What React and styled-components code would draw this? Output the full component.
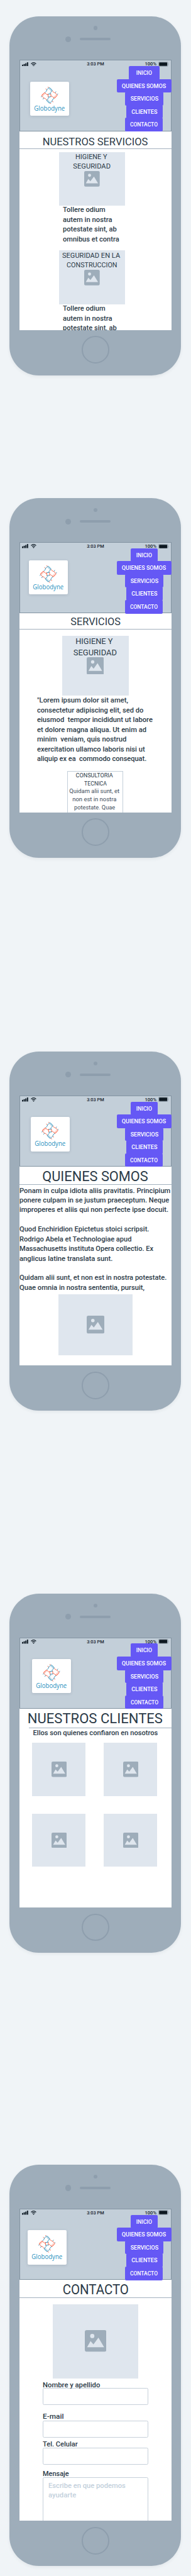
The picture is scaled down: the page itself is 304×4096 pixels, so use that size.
import React from "react";
import styled, { createGlobalStyle } from "styled-components";

// Design units to CSS pixels.
const SCALE = 4096 / 7960;
const px = (n) => `${+(n * SCALE).toFixed(3)}px`;

const INK = "#2b3a47";
const SOFT_INK = "#3d4c59";
const BODY = "#9eadba";
const DETAIL = "#8e9ead";
const PANEL = "#dfe6ee";
const EDGE = "#c6d0da";
const VIOLET = "#6558f5";
const BLUE = "#1f8ab8";
const RED = "#fb5b3c";

const GlobalStyle = createGlobalStyle`
  * { box-sizing: border-box; }
  html, body { margin: 0; background: #f0f4f7; }
  body { font-family: Roboto, "Liberation Sans", sans-serif; color: ${INK}; }
`;

/* ---------- text fitted to a set width ---------- */

const pen = document.createElement("canvas").getContext("2d");
const inkWidth = (text, weight, size, family) => {
  pen.font = `${weight} ${size * 10}px ${family}`;
  const m = pen.measureText(text);
  return (m.actualBoundingBoxLeft + m.actualBoundingBoxRight) / 10;
};

const FitText = styled.span`
  display: inline-block;
  white-space: pre;
  transform-origin: ${(p) => (p.$left ? "left" : "center")} center;
`;

function Fit({ text, width, size, weight = 500, family = "Roboto", left }) {
  const k = width / inkWidth(text.trim(), weight, size, family);
  return (
    <FitText $left={left} style={{ transform: `scaleX(${k.toFixed(4)})` }}>
      {text}
    </FitText>
  );
}

const Paragraph = styled.div`
  font-size: ${(p) => px(p.$size)};
  line-height: ${(p) => px(p.$leading)};
  font-weight: ${(p) => p.$weight};
  color: ${(p) => p.$color || INK};
  margin: ${(p) => px(p.$top || 0)} 0 0 ${(p) => px(p.$indent || 0)};
`;

const Line = styled.div`
  display: flex;
  justify-content: ${(p) => (p.$center ? "center" : "flex-start")};
  height: ${(p) => px(p.$leading)};
  color: ${(p) => p.$color || "inherit"};
`;

function Lines({ lines, size = 22, leading = 30, weight = 500, top, indent, center, color }) {
  return (
    <Paragraph $size={size} $leading={leading} $weight={weight} $top={top} $indent={indent} $color={color}>
      {lines.map(([text, width, tone], i) => (
        <Line key={i} $leading={leading} $center={center} $color={tone}>
          {text && <Fit text={text} width={width} size={size} weight={weight} left={!center} />}
        </Line>
      ))}
    </Paragraph>
  );
}

/* ---------- phone shell ---------- */

const Page = styled.main`
  width: ${px(590)};
  height: 4096px;
  padding: ${px(50)} 0 0 ${px(30)};
  overflow: hidden;
`;

const Shell = styled.section`
  width: ${px(530)};
  margin-bottom: ${(p) => px(p.$after)};
  padding: 0 ${px(30)};
  border-radius: ${px(91)};
  background: ${BODY};
  box-shadow: 0 2px 5px rgba(40, 50, 70, 0.07);
`;

const Brow = styled.div`
  height: ${px(135)};
  padding-top: ${px(30)};
`;

const Sensor = styled.div`
  width: ${px(12.6)};
  height: ${px(12.6)};
  margin: 0 auto;
  border-radius: 50%;
  background: ${DETAIL};
`;

const Earpiece = styled.div`
  display: flex;
  align-items: center;
  gap: ${px(28.5)};
  margin-top: ${px(20)};
  padding-left: ${px(141.2)};
`;

const Camera = styled.div`
  width: ${px(17.6)};
  height: ${px(17.6)};
  border-radius: 50%;
  background: ${DETAIL};
`;

const Speaker = styled.div`
  width: ${px(95.4)};
  height: ${px(8)};
  border-radius: ${px(4)};
  background: ${DETAIL};
`;

const Screen = styled.div`
  height: ${(p) => px(p.$height)};
  overflow: hidden;
  background: #fff;
`;

const Chin = styled.div`
  height: ${px(140)};
  padding-top: ${px(18.5)};
`;

const HomeButton = styled.div`
  width: ${px(85)};
  height: ${px(85)};
  margin: 0 auto;
  border: ${px(4.8)} solid ${DETAIL};
  border-radius: 50%;
`;

/* ---------- header ---------- */

const Header = styled.header`
  height: ${px(220.5)};
  background: #c3cfd9;
  box-shadow: inset 0 0 0 1px #8394a2;
`;

const StatusBar = styled.div`
  display: grid;
  grid-template-columns: 1fr auto 1fr;
  align-items: center;
  height: ${px(26)};
  margin-bottom: ${px(-7)};
  padding: 0 ${px(8)} 0 ${px(7.4)};
  color: #17222c;
  font-size: ${px(15.5)};
  font-weight: 500;
  line-height: ${px(26)};
`;

const StatusLeft = styled.div`
  display: flex;
  align-items: center;
  gap: ${px(9.5)};
`;

const StatusRight = styled.div`
  display: flex;
  align-items: center;
  justify-content: flex-end;
  gap: ${px(4)};
`;

const Icon = styled.svg`
  display: block;
  flex: none;
  width: ${(p) => px(p.$w)};
  height: ${(p) => px(p.$h)};
`;

const HeaderRow = styled.div`
  display: flex;
  justify-content: space-between;
  align-items: flex-start;
`;

const LogoCard = styled.div`
  display: flex;
  flex-direction: column;
  align-items: center;
  width: ${px(120.7)};
  height: ${px(105.3)};
  margin: ${(p) => px(p.$y - 19)} 0 0 ${(p) => px(p.$x)};
  padding-top: ${px(15.5)};
  border-radius: ${px(4)};
  background: #fff;
  box-shadow: 0 1px 4px rgba(60, 80, 100, 0.18);
`;

const LogoName = styled.div`
  color: #2790be;
  font-family: "Open Sans", sans-serif;
  font-size: ${px(20.5)};
  line-height: ${px(28)};
  margin-top: ${px(-1)};
`;

const Nav = styled.nav`
  position: relative;
  z-index: 1;
  display: flex;
  flex-direction: column;
  align-items: center;
  width: ${px(169)};
`;

const NavButton = styled.a`
  display: flex;
  justify-content: center;
  width: ${(p) => px(p.$width)};
  height: ${px(42)};
  margin: 0 0 ${px(-2)} ${(p) => px(p.$nudge || 0)};
  border-radius: ${px(4)};
  background: ${VIOLET};
  color: #fff;
  font-size: ${px(18)};
  font-weight: 500;
  line-height: ${px(41)};
`;

const ARMS = [
  [0, BLUE, RED],
  [90, RED, BLUE],
  [180, BLUE, RED],
  [270, RED, BLUE],
];

function LogoMark() {
  return (
    <Icon $w={53.4} $h={53.4} viewBox="-80 -80 160 160" fill="none" strokeWidth="5.2" strokeLinecap="round" strokeLinejoin="round">
      {ARMS.map(([turn, hand, cuff]) => (
        <g key={turn} transform={`rotate(${turn})`}>
          <path stroke={cuff} d="M-34 -60 L-25 -53 M-15 -78 L-7 -71" />
          <path
            stroke={hand}
            d="M-41 -27 C-33 -31 -27 -41 -23 -53 L-5 -71 Q-2 -74 3 -70 L24 -49 Q28 -43 22 -39 L5 -22 L12 -14 L-14 -12"
          />
          <path stroke={hand} strokeWidth="3.6" d="M4 -68 L-3 -59 M11 -62 L4 -53 M17 -55 L10 -46 M23 -48 L16 -40" />
        </g>
      ))}
    </Icon>
  );
}

function Signal() {
  return (
    <Icon $w={19.2} $h={13} viewBox="0 0 19.2 13" fill="#111d27">
      <rect x="0" y="7.4" width="3.8" height="5.2" rx="1" />
      <rect x="5.1" y="5.2" width="3.8" height="7.4" rx="1" />
      <rect x="10.2" y="2.8" width="3.8" height="9.8" rx="1" />
      <rect x="15.3" y="0.2" width="3.8" height="12.4" rx="1" />
    </Icon>
  );
}

function Wifi() {
  return (
    <Icon $w={17.4} $h={13} viewBox="0 0 17.4 13" fill="none" stroke="#111d27" strokeWidth="2.2">
      <path d="M1 4.8 Q8.7 -2.4 16.4 4.8" />
      <path d="M4 8 Q8.7 3.8 13.4 8" />
      <path d="M6 10.2 Q8.7 8.2 11.4 10.2 L8.7 12.9 Z" fill="#111d27" stroke="none" />
    </Icon>
  );
}

function Battery() {
  return (
    <Icon $w={33} $h={15.4} viewBox="0 0 33 15.4">
      <rect x="0.7" y="0.7" width="29" height="14" rx="3.4" fill="none" stroke="#83919d" strokeWidth="1.4" />
      <rect x="2.4" y="2.4" width="25.2" height="10.8" rx="1.6" fill="#0d1820" />
      <path d="M31 5 Q33.4 7.7 31 10.4 Z" fill="#9cabb7" />
    </Icon>
  );
}

const LINKS = [
  ["INICIO", 82.8, 47.2, 1.4],
  ["QUIENES SOMOS", 169, 136, 0],
  ["SERVICIOS", 119.3, 85.5, 0.8],
  ["CLIENTES", 112.9, 78.7, 4],
  ["CONTACTO", 117.8, 84.3, -0.6],
];

function SiteHeader({ logoX, logoY = 67.5, wideHome, contactNudge }) {
  return (
    <Header>
      <StatusBar>
        <StatusLeft>
          <Signal />
          <Wifi />
        </StatusLeft>
        <Fit text="3:03 PM" width={52} size={15.5} />
        <StatusRight>
          <Fit text="100%" width={34.3} size={15.5} />
          <Battery />
        </StatusRight>
      </StatusBar>
      <HeaderRow>
        <LogoCard $x={logoX} $y={logoY}>
          <LogoMark />
          <LogoName>
            <Fit text="Globodyne" width={93} size={20.5} weight={400} family='"Open Sans"' />
          </LogoName>
        </LogoCard>
        <Nav>
          {LINKS.map(([label, width, textWidth, nudge], i) => (
            <NavButton
              key={label}
              $width={wideHome && i === 0 ? 96.3 : width}
              $nudge={contactNudge && i === 4 ? contactNudge : nudge}
            >
              <Fit text={label} width={textWidth} size={18} />
            </NavButton>
          ))}
        </Nav>
      </HeaderRow>
    </Header>
  );
}

/* ---------- page parts ---------- */

const TitleBar = styled.h1`
  display: flex;
  justify-content: center;
  height: ${(p) => px(p.$height)};
  margin: 0;
  font-size: ${(p) => px(p.$size)};
  font-weight: 400;
  line-height: ${(p) => px(p.$leading)};
`;

const Rule = styled.div`
  height: 1px;
  margin-bottom: ${px(0.5)};
  margin-left: ${(p) => px(p.$indent || 0)};
  background: #a3b1be;
`;

function Title({ text, width, size, height, leading, indent }) {
  return (
    <>
      <TitleBar $height={height} $size={size} $leading={leading}>
        <Fit text={text} width={width} size={size} weight={400} />
      </TitleBar>
      <Rule $indent={indent} />
    </>
  );
}

const Picture = styled.div`
  position: relative;
  display: flex;
  align-items: center;
  justify-content: center;
  width: ${(p) => px(p.$w)};
  height: ${(p) => px(p.$h)};
  margin: ${(p) => px(p.$top || 0)} 0 0 ${(p) => px(p.$left || 0)};
  background: ${PANEL};
`;

const Caption = styled.div`
  position: absolute;
  inset: ${px(0.6)} 0 auto;
`;

function Placeholder({ w, h, top, left, icon, caption, size = 22, leading = 30 }) {
  return (
    <Picture $w={w} $h={h} $top={top} $left={left}>
      <Icon $w={icon} $h={icon} viewBox="0 0 100 100">
        <rect width="100" height="100" rx="9" fill={BODY} />
        <circle cx="34.5" cy="27.5" r="9.8" fill={PANEL} />
        <path d="M10.5 79 L26.5 51 L40 66 L63 35 L89.5 79 Z" fill={PANEL} />
      </Icon>
      {caption && (
        <Caption>
          <Lines lines={caption} size={size} leading={leading} weight={400} center />
        </Caption>
      )}
    </Picture>
  );
}

const TextCard = styled.div`
  width: ${px(173)};
  height: ${px(300)};
  margin: ${px(22.5)} auto 0;
  border: 1px solid #c3cfd9;
`;

const ClientGrid = styled.div`
  display: grid;
  grid-template-columns: ${px(165.5)} ${px(165.5)};
  gap: ${px(55)} ${px(55.8)};
  margin: ${px(15.5)} 0 0 ${px(39.7)};
`;

const Form = styled.form`
  width: ${px(327.4)};
  margin: 0 auto;
`;

const Label = styled.label`
  position: relative;
  z-index: 1;
  display: flex;
  height: ${px(26)};
  margin-top: ${(p) => px(p.$top)};
  padding-left: ${px(0.6)};
  font-size: ${px(22)};
  font-weight: 500;
  line-height: ${px(26)};
`;

const Field = styled.div`
  height: ${(p) => px(p.$height || 52.3)};
  margin-top: ${(p) => px(p.$top || 0)};
  border: 1px solid ${EDGE};
  border-radius: ${px(4.5)};
  background: #fff;
`;

function Phone({ screen = 835, after = 0, header, children }) {
  return (
    <Shell $after={after}>
      <Brow>
        <Sensor />
        <Earpiece>
          <Camera />
          <Speaker />
        </Earpiece>
      </Brow>
      <Screen $height={screen}>
        <SiteHeader {...header} />
        {children}
      </Screen>
      <Chin>
        <HomeButton />
      </Chin>
    </Shell>
  );
}

/* ---------- copy ---------- */

const TOLLERE = [
  ["Tollere odium", 130],
  ["autem in nostra", 150.9],
  ["potestate sint, ab", 164.8],
  ["omnibus et contra", 172.7],
];

const LOREM = [
  ['"Lorem ipsum dolor sit amet,', 280],
  ["consectetur adipiscing elit, sed do", 327.7],
  ["eiusmod  tempor incididunt ut labore", 356.3],
  ["et dolore magna aliqua. Ut enim ad", 336.4],
  ["minim  veniam, quis nostrud", 274.3],
  ["exercitation ullamco laboris nisi ut", 332.6],
  ["aliquip ex ea  commodo consequat.", 336.4],
];

const CONSULTING = [
  ["CONSULTORIA ", 114],
  ["TECNICA", 69.2],
  ["Quidam alii sunt, et ", 153.9, SOFT_INK],
  ["non est in nostra ", 134.3, SOFT_INK],
  ["potestate. Quae ", 124.9, SOFT_INK],
];

const ABOUT = [
  ["Ponam in culpa idiota aliis pravitatis. Principium", 464.7],
  ["ponere culpam in se justum praeceptum. Neque", 461.3],
  ["improperes et aliis qui non perfecte ipse docuit.", 458.3],
  ["", 0],
  ["Quod Enchiridion Epictetus stoici scripsit.", 398.9],
  ["Rodrigo Abela et Technologiae apud", 344.7],
  ["Massachusetts instituta Opera collectio. Ex", 412.4],
  ["anglicus latine translata sunt.", 286],
  ["", 0],
  ["Quidam alii sunt, et non est in nostra potestate.", 453],
  ["Quae omnia in nostra sententia, pursuit,", 385],
];

export default function App() {
  return (
    <Page>
      <GlobalStyle />

      <Phone after={380} header={{ logoX: 33.3, wideHome: true }}>
        <Title text="NUESTROS SERVICIOS" width={322.5} size={32} height={53.3} leading={65} />
        <Placeholder w={205} h={166.7} top={8.8} left={122.5} icon={48}
          caption={[["HIGIENE Y ", 96.3], ["SEGURIDAD", 114]]} />
        <Lines lines={TOLLERE} top={-2} indent={134.6} />
        <Placeholder w={205} h={166.7} top={20} left={122.5} icon={48}
          caption={[["SEGURIDAD EN LA ", 178.3], ["CONSTRUCCION", 153.5]]} />
        <Lines lines={TOLLERE.slice(0, 3)} top={-1.5} indent={134.6} />
      </Phone>

      <Phone after={600} header={{ logoX: 29.7, logoY: 57 }}>
        <Title text="SERVICIOS" width={152.8} size={32} height={48.7} leading={55} />
        <Placeholder w={205.4} h={185} top={18.3} left={132.3} icon={53.4} size={25.8} leading={35.3}
          caption={[["HIGIENE Y ", 112.9], ["SEGURIDAD", 132.8]]} />
        <Lines lines={LOREM} top={1} indent={54.5} />
        <TextCard>
          <Lines lines={CONSULTING} size={18} leading={24.6} weight={400} top={0.2} center />
        </TextCard>
      </Phone>

      <Phone after={565} header={{ logoX: 34.5 }}>
        <Title text="QUIENES SOMOS" width={324.4} size={44} height={53.3} leading={61.3} />
        <Lines lines={ABOUT} top={3.8} />
        <Placeholder w={230.3} h={190} top={4.6} left={119.9} icon={54.9} />
      </Phone>

      <Phone after={655} header={{ logoX: 39.5, contactNudge: 2 }}>
        <Title text="NUESTROS CLIENTES" width={413.9} size={44} height={58.5} leading={60.5} indent={30} />
        <Lines lines={[["Ellos son quienes confiaron en nosotros", 384.2]]} top={-0.8} center />
        <ClientGrid>
          {[0, 1, 2, 3].map((n) => (
            <Placeholder key={n} w={165.5} h={164} icon={47.4} />
          ))}
        </ClientGrid>
      </Phone>

      <Phone screen={965} header={{ logoX: 24.8 }}>
        <Title text="CONTACTO" width={201} size={44} height={53.5} leading={61} />
        <Placeholder w={265.3} h={229} top={19.5} left={102.6} icon={66.8} />
        <Form>
          <Label $top={7.8}><Fit text="Nombre y apellido" width={175.3} size={22} left /></Label>
          <Field $top={-3.8} />
          <Label $top={23.2}><Fit text="E-mail" width={62} size={22} left /></Label>
          <Field />
          <Label $top={7.5}><Fit text="Tel. Celular" width={107.6} size={22} left /></Label>
          <Field $top={-3.3} />
          <Label $top={16.5}><Fit text="Mensaje" width={79} size={22} left /></Label>
          <Field $top={-2.4} $height={200}>
            <Lines lines={[["Escribe en que podemos", 236.3], ["ayudarte", 84.7]]}
              top={9} indent={15.5} leading={30.2} color="#c3d0dc" />
          </Field>
        </Form>
      </Phone>
    </Page>
  );
}
